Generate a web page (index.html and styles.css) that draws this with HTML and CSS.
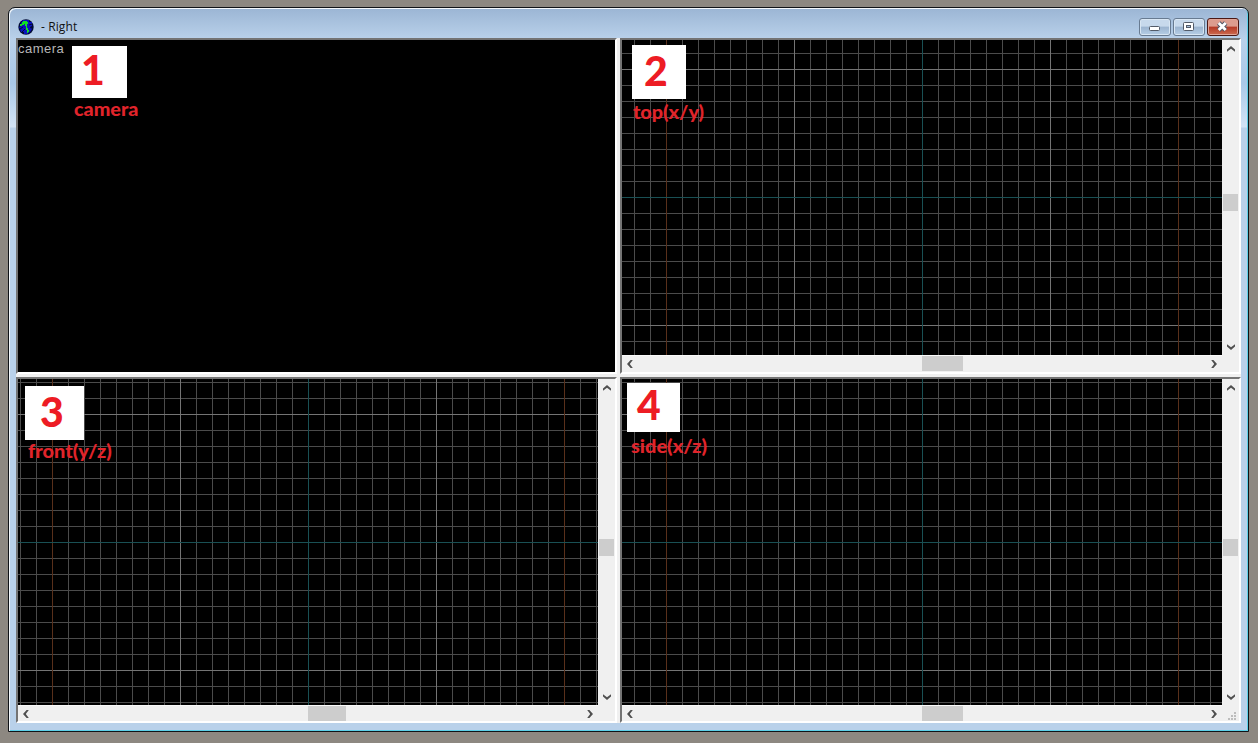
FILE: index.html
```html
<!DOCTYPE html>
<html lang="en">
<head>
<meta charset="utf-8">
<title>- Right</title>
<link rel="stylesheet" href="styles.css">
</head>
<body>
<svg class="defs" aria-hidden="true">
  <symbol id="up" viewBox="0 0 8 6"><path d="M0 5.8V3.600L4 0l4 3.600v2.200L4 2.800z"/></symbol>
</svg>
<div class="window">
  <header class="titlebar">
    <svg class="logo" viewBox="0 0 16 16"><circle cx="8" cy="8" r="7.7" fill="#000b35"/><path d="M5 1h6v2h3v4l-2 1 2 2-2 3-3 2H6v-2H3l-1-3-1-2 2-1V4z" fill="#0b13bd"/><path d="M5 2h4v1h1v2H9v4h1v2h1v2h-1v1H9v-3H8V7H7V5H6v1H4v1H2V5h2V3h1z" fill="#10df23"/><path d="M5 2h4v2H6v2H3V5h2z" fill="#10df23"/><path d="M2 10l3-2M11 6l3-1M4 13l3-3M12 9l2-1" stroke="#000b35" fill="none"/></svg>
    <span class="title">- Right</span>
    <div class="buttons">
      <span class="btn"><svg viewBox="0 0 32 18"><rect x="10.5" y="8.5" width="10" height="4" rx="1" fill="#fff" stroke="#535b68"/></svg></span>
      <span class="btn"><svg viewBox="0 0 32 18"><rect x="10.5" y="4.5" width="10" height="8" rx="1" fill="#fff" stroke="#535b68"/><rect x="13.5" y="7.5" width="4" height="2" fill="#a9c0da" stroke="#535b68"/></svg></span>
      <span class="btn close"><svg viewBox="0 0 32 18"><path d="M11.7 5l7 7M18.7 5l-7 7" stroke="#535766" stroke-width="4.8"/><path d="M11.7 5l7 7M18.7 5l-7 7" stroke="#fff" stroke-width="2.8"/></svg></span>
    </div>
  </header>
  <main class="client">
    <section class="pane camera"><span class="caption">camera</span></section>
    <section class="pane scrolls">
      <div class="grid top"></div>
      <div class="vbar"><svg class="arrow"><use href="#up"/></svg><i class="thumb v-top"></i><svg class="arrow down"><use href="#up"/></svg></div>
      <div class="hbar"><svg class="arrow left"><use href="#up"/></svg><i class="thumb h-wide"></i><svg class="arrow right"><use href="#up"/></svg></div>
      <div class="corner"></div>
    </section>
    <section class="pane scrolls lower">
      <div class="grid front"></div>
      <div class="vbar"><svg class="arrow"><use href="#up"/></svg><i class="thumb v-low"></i><svg class="arrow down"><use href="#up"/></svg></div>
      <div class="hbar"><svg class="arrow left"><use href="#up"/></svg><i class="thumb h-front"></i><svg class="arrow right"><use href="#up"/></svg></div>
      <div class="corner"></div>
    </section>
    <section class="pane scrolls lower">
      <div class="grid side"></div>
      <div class="vbar"><svg class="arrow"><use href="#up"/></svg><i class="thumb v-low"></i><svg class="arrow down"><use href="#up"/></svg></div>
      <div class="hbar"><svg class="arrow left"><use href="#up"/></svg><i class="thumb h-wide"></i><svg class="arrow right"><use href="#up"/></svg></div>
      <div class="corner"><svg class="grip" viewBox="0 0 8 8"><path d="M6 0h2v2H6zM3 3h2v2H3zM6 3h2v2H6zM0 6h2v2H0zM3 6h2v2H3zM6 6h2v2H6z"/></svg></div>
    </section>
  </main>
</div>
<div class="num n1"><b>1</b></div><div class="note t1">camera</div>
<div class="num n2"><b>2</b></div><div class="note t2">top(x/y)</div>
<div class="num n3"><b>3</b></div><div class="note t3">front(y/z)</div>
<div class="num n4"><b>4</b></div><div class="note t4">side(x/z)</div>
</body>
</html>
```
FILE: styles.css
```css
* { box-sizing: border-box; }
body {
  margin: 0;
  width: 1258px;
  height: 743px;
  padding: 7px 9px 11px 8px;
  background: #8d8881;
  overflow: hidden;
  font-family: "Open Sans", sans-serif;
}
.defs { position: absolute; width: 0; height: 0; }
.window {
  width: 1241px;
  height: 725px;
  border: 1px solid #101317;
  border-radius: 7px 7px 0 0;
  padding: 0 6px 7px 7px;
  background: linear-gradient(#9bb5d4, #b9d1ea 31px, #a9c8e8 75px, #d3e4f6 119px, #b9d1ea 120px);
  box-shadow: inset 1px 1px #f4f9fd, inset -1px -1px #5cd0e8;
}
.titlebar { height: 30px; display: flex; align-items: center; padding: 7px 3px 0 2px; }
.logo { width: 16px; height: 16px; }
.title { font-size: 12px; margin-left: 7px; color: #111; line-height: 16px; letter-spacing: .1px; }
.buttons { margin-left: auto; display: flex; gap: 2px; }
.btn {
  width: 32px;
  height: 18px;
  border: 1px solid #687b91;
  border-radius: 3px;
  background: linear-gradient(#c7d9ec 0 45%, #9bb4d0 50%, #b6cee5);
  box-shadow: inset 0 0 0 1px #d8e6f3;
}
.btn svg { display: block; width: 32px; height: 18px; margin: -1px; fill: none; }
.close { border-color: #4b1915; background: linear-gradient(#dc9c8e 0 45%, #b53925 50%, #cb6b50); box-shadow: inset 0 0 0 1px #e0a597; }
.client {
  display: grid;
  grid-template: 336px 346px / 601px 621px;
  gap: 3px;
  width: 1225px;
  height: 685px;
  background: #f0f0f0;
}
.pane {
  border: solid;
  border-width: 2px;
  border-color: #747474 #fff #fff #747474;
  overflow: hidden;
  background: #f0f0f0;
}
.camera { background: #000; }
.caption { display: block; padding-top: 1px; font: 13px/16px "Liberation Sans", sans-serif; color: #b8b8b8; letter-spacing: .5px; }
.scrolls { display: grid; grid-template: minmax(0, 1fr) 17px / minmax(0, 1fr) 17px; }
.lower { grid-template-rows: minmax(0, 1fr) 16px; }
.grid {
  background-color: #000;
  background-image:
    linear-gradient(#195054, #195054),
    linear-gradient(#195054, #195054),
    linear-gradient(90deg, #59301b 1px, transparent 1px),
    linear-gradient(90deg, #747474 1px, transparent 1px),
    linear-gradient(#747474 1px, transparent 1px),
    linear-gradient(90deg, #4b4b4b 1px, transparent 1px),
    linear-gradient(#4b4b4b 1px, transparent 1px);
  background-size: 1px 100%, 100% 1px, 512px 100%, 128px 100%, 100% 128px, 16px 100%, 100% 16px;
  background-repeat: no-repeat, no-repeat, repeat, repeat, repeat, repeat, repeat;
}
.top { background-position: 300px 0, 0 157px, 44px 0, 44px 0, 0 29px, 12px 0, 0 13px; }
.front { background-position: 290px 0, 0 163px, 34px 0, 34px 0, 0 35px, 2px 0, 0 3px; }
.side { background-position: 300px 0, 0 163px, 44px 0, 44px 0, 0 35px, 12px 0, 0 3px; }
.vbar, .hbar { display: flex; justify-content: space-between; align-items: center; background: #f0f0f0; }
.vbar { flex-direction: column; padding: 6px 0 5px; }
.hbar { padding: 0 4px 1px; border-top: 1px solid #fafafa; }
.lower .hbar { padding-bottom: 0; }
.arrow { width: 8px; height: 6px; fill: #505050; flex: none; }
.down { transform: rotate(180deg); }
.left { transform: rotate(-90deg); }
.right { transform: rotate(90deg); }
.thumb { background: #cdcdcd; flex: none; }
.v-top { width: 15px; height: 17px; margin: 142px auto auto 1px; }
.v-low { width: 15px; height: 17px; margin: 148px auto auto 1px; }
.h-wide { width: 41px; height: 15px; margin: 0 auto 0 288px; }
.h-front { width: 38px; height: 15px; margin: 0 auto 0 278px; }
.corner { display: flex; padding: 7px 0 0 6px; }
.grip { width: 8px; height: 8px; fill: #bdbdbd; }
/* Viewport labels float over the grids. */
.num { position: absolute; background: #fff; color: #ed1c24; font: 900 41px/42px Lato, sans-serif; }
.num b { display: block; font-weight: 900; }
.note { position: absolute; color: #e0242b; font: 900 19px/24px Lato, sans-serif; white-space: nowrap; transform-origin: 0 50%; }
.n1 { left: 72px; top: 46px; width: 55px; height: 52px; padding: 3px 0 0 9px; }
.n2 { left: 632px; top: 45px; width: 54px; height: 54px; padding: 5px 0 0 12px; }
.n3 { left: 25px; top: 386px; width: 59px; height: 54px; padding: 5px 0 0 15px; }
.n4 { left: 627px; top: 383px; width: 53px; height: 49px; padding: 1px 0 0 10px; }
.t1 { left: 74px; top: 97px; transform: scaleX(1.04); }
.t2 { left: 633px; top: 100px; transform: scaleX(1.04); }
.t3 { left: 28px; top: 439px; transform: scaleX(1.05); }
.t4 { left: 631px; top: 434px; transform: scaleX(1.05); }
```
